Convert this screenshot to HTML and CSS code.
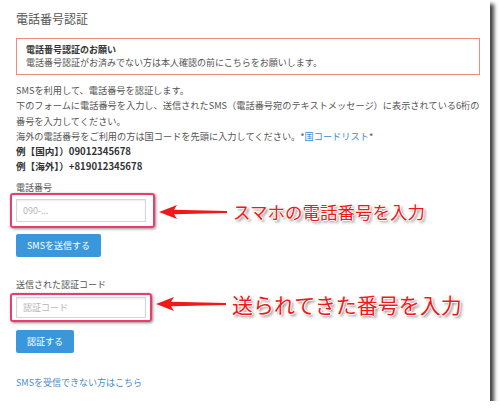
FILE: index.html
```html
<!DOCTYPE html>
<html lang="ja">
<head>
  <meta charset="UTF-8" />
  <title>電話番号認証</title>
  <link rel="stylesheet" href="styles.css">
</head>
<body>

  <div class="sheet">
    <h2 class="title">電話番号認証</h2>

    <div class="notice">
      <strong>電話番号認証のお願い</strong>
      <p>電話番号認証がお済みでない方は本人確認の前にこちらをお願いします。</p>
    </div>

    <div class="intro">
      <p>SMSを利用して、電話番号を認証します。</p>
      <p>下のフォームに電話番号を入力し、送信されたSMS（電話番号宛のテキストメッセージ）に表示されている6桁の番号を入力してください。</p>
      <p>海外の電話番号をご利用の方は国コードを先頭に入力してください。*<a href="#">国コードリスト</a>*</p>
      <p class="sample">例【国内】）09012345678</p>
      <p class="sample">例【海外】）+819012345678</p>
    </div>

    <form class="step step-tel">
      <label class="label">電話番号</label>
      <div class="mark">
        <input type="text" class="field" placeholder="090-...">
      </div>
      <button type="button" class="btn">SMSを送信する</button>
    </form>

    <form class="step step-code">
      <label class="label">送信された認証コード</label>
      <div class="mark mark-small">
        <input type="text" class="field" placeholder="認証コード">
      </div>
      <button type="button" class="btn">認証する</button>
    </form>

    <a href="#" class="help">SMSを受信できない方はこちら</a>

    <!-- annotations -->
    <div class="note note-tel">
      <svg class="arrow" width="70" height="16" viewBox="0 0 70 16">
        <polygon points="0,8 18,1 15,5.8 68,7 68,9 15,10.2 18,15" fill="#f01818"/>
      </svg>
      <span>スマホの電話番号を入力</span>
    </div>
    <div class="note note-code">
      <svg class="arrow" width="72" height="16" viewBox="0 0 72 16">
        <polygon points="0,8 18,1 15,5.8 70,7 70,9 15,10.2 18,15" fill="#f01818"/>
      </svg>
      <span class="wide">送られてきた番号を入力</span>
    </div>
  </div>

</body>
</html>
```

FILE: styles.css
```css
body {
  margin: 0;
  background: #fff;
  font-family: "Noto Sans CJK JP", "Noto Sans", sans-serif;
  color: #444;
}

.sheet {
  position: relative;
  width: 474px;
  height: 401px;
  padding-left: 16px;
  background: #fff;
  box-shadow: 4px 4px 4px rgba(0, 0, 0, 0.75);
}

.title {
  margin: 0;
  padding-top: 11px;
  font-size: 12px;
  font-weight: normal;
  line-height: 16px;
  color: #555;
}

.notice {
  width: 444px;
  margin-top: 11px;
  padding: 4px 9px 5px;
  border: 1px solid #f2897d;
  font-size: 9px;
  line-height: 13px;
}

.notice strong {
  color: #333;
}

.notice p {
  margin: 0;
  color: #555;
}

.intro {
  width: 466px;
  margin-top: 8px;
  font-size: 9.2px;
  line-height: 15.3px;
  color: #555;
}

.intro p {
  margin: 0;
}

.intro a {
  color: #3a8ad2;
  text-decoration: none;
}

.intro .sample {
  font-weight: bold;
  color: #333;
  font-size: 9.6px;
}

.step {
  display: flex;
  flex-direction: column;
  align-items: flex-start;
  margin: 0;
}

.step-tel {
  margin-top: 7px;
}

.step-code {
  margin-top: 22px;
}

.label {
  font-size: 9px;
  line-height: 12px;
  color: #555;
}

.mark {
  margin: -1px 0 0 -6px;
  padding: 4px 7px 4px 4px;
  border: 2px solid #ec3b6e;
  border-radius: 3px;
  box-shadow: 1px 1px 3px rgba(0, 0, 0, 0.45);
}

.mark-small {
  margin-top: 2px;
  padding: 2px 4px;
}

.field {
  display: block;
  width: 130px;
  height: 23px;
  box-sizing: border-box;
  padding: 0 6px;
  border: 1px solid #d6d6d6;
  box-shadow: inset 0 1px 2px rgba(0, 0, 0, 0.08);
  font-family: inherit;
  font-size: 9px;
  color: #555;
  outline: none;
}

.mark-small .field {
  height: 21px;
}

.field::placeholder {
  color: #b5b5b5;
}

.btn {
  margin-top: 6px;
  height: 23px;
  padding: 0 11px;
  border: none;
  border-radius: 2px;
  background: #3b97dc;
  color: #fff;
  font-family: inherit;
  font-size: 9px;
}

.step-code .btn {
  margin-top: 8px;
}

.help {
  display: block;
  width: fit-content;
  margin-top: 24px;
  font-size: 9px;
  line-height: 12px;
  color: #4a8bc8;
  text-decoration: none;
}

.note {
  position: absolute;
  display: flex;
  align-items: center;
  gap: 4px;
}

.note-tel {
  left: 159px;
  top: 200px;
}

.note-code {
  left: 156px;
  top: 292px;
}

.note span {
  font-size: 17.5px;
  line-height: 24px;
  color: #f01818;
  text-shadow: -1px 0 #fff, 1px 0 #fff, 0 -1px #fff, 0 1px #fff, 2px 2px 3px rgba(0, 0, 0, 0.55);
}

.note .wide {
  font-size: 21px;
}
```
